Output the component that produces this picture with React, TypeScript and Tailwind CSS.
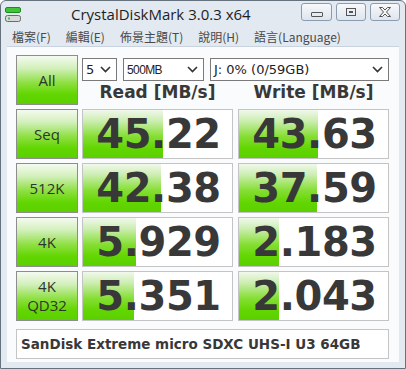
import React from "react";

const rows = [
  { label: ["Seq"], read: "45.22", readBar: 80, write: "43.63", writeBar: 79 },
  { label: ["512K"], read: "42.38", readBar: 78, write: "37.59", writeBar: 78 },
  { label: ["4K"], read: "5.929", readBar: 53, write: "2.183", writeBar: 40 },
  { label: ["4K", "QD32"], read: "5.351", readBar: 51, write: "2.043", writeBar: 40 },
];

const menus = ["檔案(F)", "編輯(E)", "佈景主題(T)", "說明(H)", "語言(Language)"];

function Chevron() {
  return (
    <svg width="11" height="7" viewBox="0 0 11 7" className="shrink-0">
      <polyline points="1,1 5.5,5.5 10,1" fill="none" stroke="#333" strokeWidth="1.6" />
    </svg>
  );
}

function Select({ text, className }: { text: string; className: string }) {
  return (
    <div
      className={`flex h-[23px] items-center justify-between border border-[#7a7a7a] bg-white pl-[3px] pr-[5px] text-[#222] ${className}`}
    >
      <span>{text}</span>
      <Chevron />
    </div>
  );
}

function LabelButton({ lines }: { lines: string[] }) {
  return (
    <div className="flex h-[50px] w-[62px] shrink-0 flex-col items-center justify-center border border-[#8d8d8d] bg-[linear-gradient(to_bottom,#f4faf0_0%,#d4f0bd_25%,#8fe045_55%,#62d600_80%,#5ccf00_100%)] font-['Open_Sans',sans-serif] text-[15px] leading-[19px] text-[#2c362c]">
      {lines.map((l) => (
        <span key={l}>{l}</span>
      ))}
    </div>
  );
}

function ValueBox({ value, bar }: { value: string; bar: number }) {
  return (
    <div className="relative flex h-[50px] w-[151px] shrink-0 items-center justify-center overflow-hidden border border-[#c4c4c4] bg-white">
      <div
        className="absolute bottom-0 left-0 top-0 bg-[linear-gradient(to_bottom,#f1f8ec_0%,#cdeeb3_22%,#86de34_55%,#62d600_80%,#5bd000_100%)]"
        style={{ width: bar }}
      />
      <span className="relative pl-[2px] font-['DejaVu_Sans',sans-serif] text-[40px] font-bold leading-none tracking-[-0.4px] text-[#383838]">
        {value}
      </span>
    </div>
  );
}

function AppIcon() {
  return (
    <svg width="16" height="16" viewBox="0 0 16 16">
      <rect x="0.5" y="0.5" width="15" height="5" rx="1.5" fill="#3fc43a" stroke="#1f8a1f" />
      <rect x="0.5" y="8.5" width="15" height="6" rx="2" fill="#d9d9d9" stroke="#6b6b6b" />
      <rect x="3" y="10.5" width="2" height="2" fill="#3fc43a" />
    </svg>
  );
}

function CaptionButton({ children, className }: { children: React.ReactNode; className: string }) {
  return (
    <div
      className={`flex h-[18px] items-center justify-center rounded-[3px] border border-[#8b9bb0] bg-[linear-gradient(to_bottom,#f7f9fc,#dde5ee)] ${className}`}
    >
      {children}
    </div>
  );
}

export default function App() {
  return (
    <div className="relative flex h-[369px] w-[406px] flex-col overflow-hidden rounded-t-[6px] border border-[#66717e] bg-[#e2e9f1]">
      {/* title bar */}
      <div className="flex h-[27px] shrink-0 items-center">
        <div className="ml-[4px] mt-[1px]">
          <AppIcon />
        </div>
        <span className="ml-[50px] font-['Open_Sans',sans-serif] text-[15px] leading-none text-[#1e1e1e]">
          CrystalDiskMark 3.0.3 x64
        </span>
        <div className="ml-auto mr-[5px] flex gap-[4px] self-start pt-[2px]">
          <CaptionButton className="w-[31px]">
            <div className="mt-[4px] h-[5px] w-[12px] rounded-[1px] border border-[#555]" />
          </CaptionButton>
          <CaptionButton className="w-[30px]">
            <div className="flex h-[8px] w-[10px] items-center justify-center border border-[#555]">
              <div className="h-[2px] w-[4px] border border-[#555]" />
            </div>
          </CaptionButton>
          <CaptionButton className="w-[30px]">
            <svg width="14" height="10" viewBox="0 0 14 10">
              <path
                d="M1.5,0.5 L4.5,0.5 L7,3 L9.5,0.5 L12.5,0.5 L8.5,5 L12.5,9.5 L9.5,9.5 L7,7 L4.5,9.5 L1.5,9.5 L5.5,5 Z"
                fill="#f4f4f4"
                stroke="#555"
                strokeWidth="1"
              />
            </svg>
          </CaptionButton>
        </div>
      </div>

      {/* menu bar */}
      <div className="mx-[6px] flex h-[18px] shrink-0 items-center gap-[15px] pl-[5px] font-['Noto_Sans_CJK_TC','Noto_Sans',sans-serif] text-[12px] leading-none text-[#4a4a4a]">
        {menus.map((m) => (
          <span key={m}>{m}</span>
        ))}
      </div>

      {/* client area */}
      <div className="mx-[6px] mb-[6px] flex flex-1 flex-col border-t border-[#c9d3de] bg-[#fafbfc] pl-[9px] pt-[8px]">
        <div className="flex gap-[4px]">
          <LabelButton lines={["All"]} />
          <div className="flex w-[307px] flex-col">
            <div className="mt-[3px] flex gap-[6px]">
              <Select text="5" className="w-[35px] font-['DejaVu_Sans',sans-serif] text-[13px]" />
              <Select text="500MB" className="w-[81px] font-['Liberation_Sans',sans-serif] text-[12px] tracking-[-0.6px]" />
              <Select text="J: 0% (0/59GB)" className="w-[179px] font-['DejaVu_Sans',sans-serif] text-[13px]" />
            </div>
            <div className="flex h-[24px] items-center gap-[5px] font-['DejaVu_Sans',sans-serif] text-[17px] font-bold text-[#383838]">
              <span className="w-[151px] text-center">Read [MB/s]</span>
              <span className="w-[151px] text-center">Write [MB/s]</span>
            </div>
          </div>
        </div>

        <div className="mt-[4px] flex flex-col gap-[4px]">
          {rows.map((r) => (
            <div key={r.read} className="flex">
              <LabelButton lines={r.label} />
              <div className="ml-[4px]">
                <ValueBox value={r.read} bar={r.readBar} />
              </div>
              <div className="ml-[5px]">
                <ValueBox value={r.write} bar={r.writeBar} />
              </div>
            </div>
          ))}
        </div>

        <div className="mt-[8px] flex h-[30px] w-[373px] items-center border border-[#c4c4c4] bg-white pl-[4px] font-['DejaVu_Sans',sans-serif] text-[13.5px] font-bold text-[#383838]">
          SanDisk Extreme micro SDXC UHS-I U3 64GB
        </div>
      </div>
    </div>
  );
}
